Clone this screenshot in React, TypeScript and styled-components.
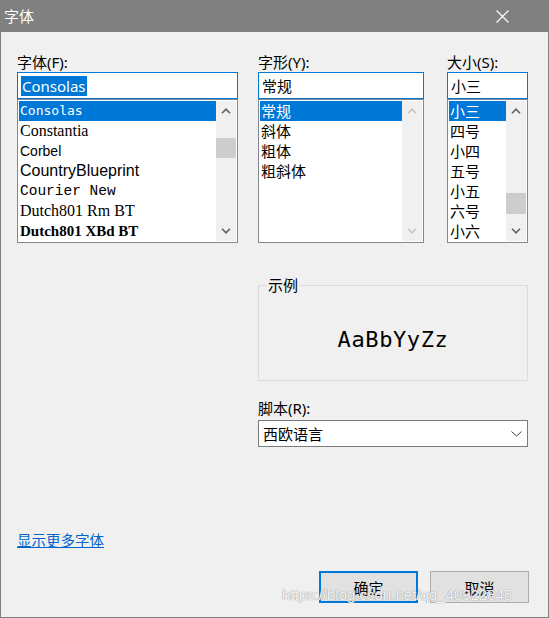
import styled, { createGlobalStyle } from 'styled-components';

const GlobalStyle = createGlobalStyle`
  html, body {
    margin: 0;
    padding: 0;
    background: #fff;
  }
  body {
    font-family: "Noto Sans", "Noto Sans CJK SC", sans-serif;
  }
  * {
    box-sizing: border-box;
  }
`;

const Window = styled.div`
  position: relative;
  width: 549px;
  height: 618px;
  border: 1px solid #808080;
  border-top: none;
  background: #f0f0f0;
  display: flex;
  flex-direction: column;
  font-size: 15px;
  color: #000;
`;

const TitleBar = styled.div`
  height: 32px;
  flex-shrink: 0;
  background: #808080;
  color: #fff;
  display: flex;
  align-items: center;
  justify-content: space-between;
  padding: 0 39px 0 3px;
  line-height: 18px;
`;

const Body = styled.div`
  padding: 20px 19px 0 16px;
  display: flex;
  flex-direction: column;
`;

const Grid = styled.div`
  display: grid;
  grid-template-columns: 221px 20px 166px 23px 81px;
`;

const Column = styled.div<{ $col: number }>`
  grid-column: ${(p) => p.$col};
  display: flex;
  flex-direction: column;
`;

const Label = styled.div`
  height: 18px;
  line-height: 18px;
  padding-top: 1px;
`;

const Field = styled.div`
  margin-top: 2px;
  height: 27px;
  border: 1px solid #0078d7;
  background: #fff;
  display: flex;
  align-items: center;
  padding-left: 3px;
  line-height: 20px;
`;

const Selected = styled.span`
  background: #0078d7;
  color: #fff;
  padding: 0 1px;
`;

const List = styled.div`
  height: 144px;
  border: 1px solid #828790;
  padding: 1px;
  background: #fff;
  display: flex;
`;

const Items = styled.div`
  flex: 1;
  display: flex;
  flex-direction: column;
  overflow: hidden;
`;

const Item = styled.div<{ $font?: string; $size?: number; $bold?: boolean; $active?: boolean }>`
  height: 20px;
  line-height: 20px;
  padding-left: 1px;
  white-space: nowrap;
  font-family: ${(p) => p.$font || 'inherit'};
  font-size: ${(p) => (p.$size ? `${p.$size}px` : 'inherit')};
  font-weight: ${(p) => (p.$bold ? 700 : 400)};
  background: ${(p) => (p.$active ? '#0078d7' : 'transparent')};
  color: ${(p) => (p.$active ? '#fff' : '#000')};
`;

const ScrollBar = styled.div`
  width: 20px;
  background: #f0f0f0;
  display: flex;
  flex-direction: column;
`;

const ArrowButton = styled.div<{ $disabled?: boolean }>`
  height: 20px;
  display: flex;
  align-items: center;
  justify-content: center;
  color: ${(p) => (p.$disabled ? '#c6c6c6' : '#606060')};
`;

const Track = styled.div`
  flex: 1;
`;

const Thumb = styled.div<{ $top: number; $h: number }>`
  margin-top: ${(p) => p.$top}px;
  height: ${(p) => p.$h}px;
  background: #cdcdcd;
`;

const SampleGroup = styled.div`
  grid-column: 3 / 6;
  position: relative;
  margin-top: 42px;
  height: 96px;
  border: 1px solid #dcdcdc;
  display: flex;
  align-items: center;
  justify-content: center;
  padding-top: 14px;
`;

const Legend = styled.span`
  position: absolute;
  left: 8px;
  top: -10px;
  line-height: 18px;
  padding: 0 1px;
  background: #f0f0f0;
`;

const SampleText = styled.span`
  font-family: "DejaVu Sans Mono", monospace;
  font-size: 22px;
  letter-spacing: 0.6px;
  line-height: 24px;
`;

const ScriptBlock = styled.div`
  grid-column: 3 / 6;
  margin-top: 17px;
  display: flex;
  flex-direction: column;
`;

const Select = styled.div`
  margin-top: 4px;
  height: 27px;
  border: 1px solid #7a7a7a;
  background: #fff;
  display: flex;
  align-items: center;
  justify-content: space-between;
  padding: 0 5px 0 4px;
  line-height: 20px;
`;

const MoreLink = styled.a`
  align-self: flex-start;
  margin-top: 84px;
  line-height: 18px;
  font-size: 14.5px;
  color: #0066cc;
  text-decoration: underline;
  cursor: pointer;
`;

const Buttons = styled.div`
  margin-top: 22px;
  display: flex;
  justify-content: flex-end;
  gap: 12px;
`;

const Button = styled.button<{ $default?: boolean }>`
  width: 99px;
  height: 32px;
  background: #e1e1e1;
  border: ${(p) => (p.$default ? '2px solid #0078d7' : '1px solid #adadad')};
  font-family: inherit;
  font-size: 15px;
  color: #000;
  padding: 0;
  cursor: pointer;
`;

// blog watermark stamped across the lower right corner
const Watermark = styled.div`
  position: absolute;
  left: 281px;
  top: 586px;
  font-family: "Liberation Sans", Arial, sans-serif;
  font-size: 15px;
  line-height: 17px;
  color: rgba(255, 255, 255, 0.9);
  text-shadow: 0 0 1px #9a9a9a, 0 0 1px #9a9a9a;
  pointer-events: none;
  white-space: nowrap;
`;

const ChevronUp = () => (
  <svg width="10" height="6" viewBox="0 0 10 6">
    <path d="M1 5.2 L5 1.2 L9 5.2" fill="none" stroke="currentColor" strokeWidth="1.6" />
  </svg>
);

const ChevronDown = () => (
  <svg width="10" height="6" viewBox="0 0 10 6">
    <path d="M1 0.8 L5 4.8 L9 0.8" fill="none" stroke="currentColor" strokeWidth="1.6" />
  </svg>
);

const CloseIcon = () => (
  <svg width="13" height="13" viewBox="0 0 13 13">
    <path d="M0.5 0.5 L12.5 12.5 M12.5 0.5 L0.5 12.5" stroke="#fff" strokeWidth="1.1" />
  </svg>
);

const SelectChevron = () => (
  <svg width="11" height="6" viewBox="0 0 11 6">
    <path d="M0.5 0.5 L5.5 5 L10.5 0.5" fill="none" stroke="#404040" strokeWidth="1" />
  </svg>
);

type Bar = { thumb?: { top: number; h: number }; disabled?: boolean };

function Scroll({ thumb, disabled }: Bar) {
  return (
    <ScrollBar>
      <ArrowButton $disabled={disabled}>
        <ChevronUp />
      </ArrowButton>
      <Track>{thumb && <Thumb $top={thumb.top} $h={thumb.h} />}</Track>
      <ArrowButton $disabled={disabled}>
        <ChevronDown />
      </ArrowButton>
    </ScrollBar>
  );
}

const fonts = [
  { name: 'Consolas', font: '"DejaVu Sans Mono", monospace', size: 13 },
  { name: 'Constantia', font: '"Liberation Serif", serif', size: 16 },
  { name: 'Corbel', font: '"Liberation Sans", sans-serif', size: 14 },
  { name: 'CountryBlueprint', font: '"Liberation Sans", sans-serif', size: 16 },
  { name: 'Courier New', font: '"Liberation Mono", monospace', size: 14.5 },
  { name: 'Dutch801 Rm BT', font: '"Liberation Serif", serif', size: 16 },
  { name: 'Dutch801 XBd BT', font: '"Liberation Serif", serif', size: 15, bold: true },
];

const styles = ['常规', '斜体', '粗体', '粗斜体'];
const sizes = ['小三', '四号', '小四', '五号', '小五', '六号', '小六'];

export default function App() {
  return (
    <>
      <GlobalStyle />
      <Window>
        <TitleBar>
          <span>字体</span>
          <CloseIcon />
        </TitleBar>
        <Body>
          <Grid>
            <Column $col={1}>
              <Label>字体(F):</Label>
              <Field>
                <Selected>Consolas</Selected>
              </Field>
              <List>
                <Items>
                  {fonts.map((f, i) => (
                    <Item key={f.name} $font={f.font} $size={f.size} $bold={f.bold} $active={i === 0}>
                      {f.name}
                    </Item>
                  ))}
                </Items>
                <Scroll thumb={{ top: 17, h: 20 }} />
              </List>
            </Column>

            <Column $col={3}>
              <Label>字形(Y):</Label>
              <Field>常规</Field>
              <List>
                <Items>
                  {styles.map((s, i) => (
                    <Item key={s} $active={i === 0}>
                      {s}
                    </Item>
                  ))}
                </Items>
                <Scroll disabled />
              </List>
            </Column>

            <Column $col={5}>
              <Label>大小(S):</Label>
              <Field>小三</Field>
              <List>
                <Items>
                  {sizes.map((s, i) => (
                    <Item key={s} $active={i === 0}>
                      {s}
                    </Item>
                  ))}
                </Items>
                <Scroll thumb={{ top: 72, h: 21 }} />
              </List>
            </Column>

            <SampleGroup>
              <Legend>示例</Legend>
              <SampleText>AaBbYyZz</SampleText>
            </SampleGroup>

            <ScriptBlock>
              <Label>脚本(R):</Label>
              <Select>
                <span>西欧语言</span>
                <SelectChevron />
              </Select>
            </ScriptBlock>
          </Grid>

          <MoreLink>显示更多字体</MoreLink>

          <Buttons>
            <Button $default>确定</Button>
            <Button>取消</Button>
          </Buttons>
        </Body>
        <Watermark>https://blog.csdn.net/qq_40922845</Watermark>
      </Window>
    </>
  );
}
